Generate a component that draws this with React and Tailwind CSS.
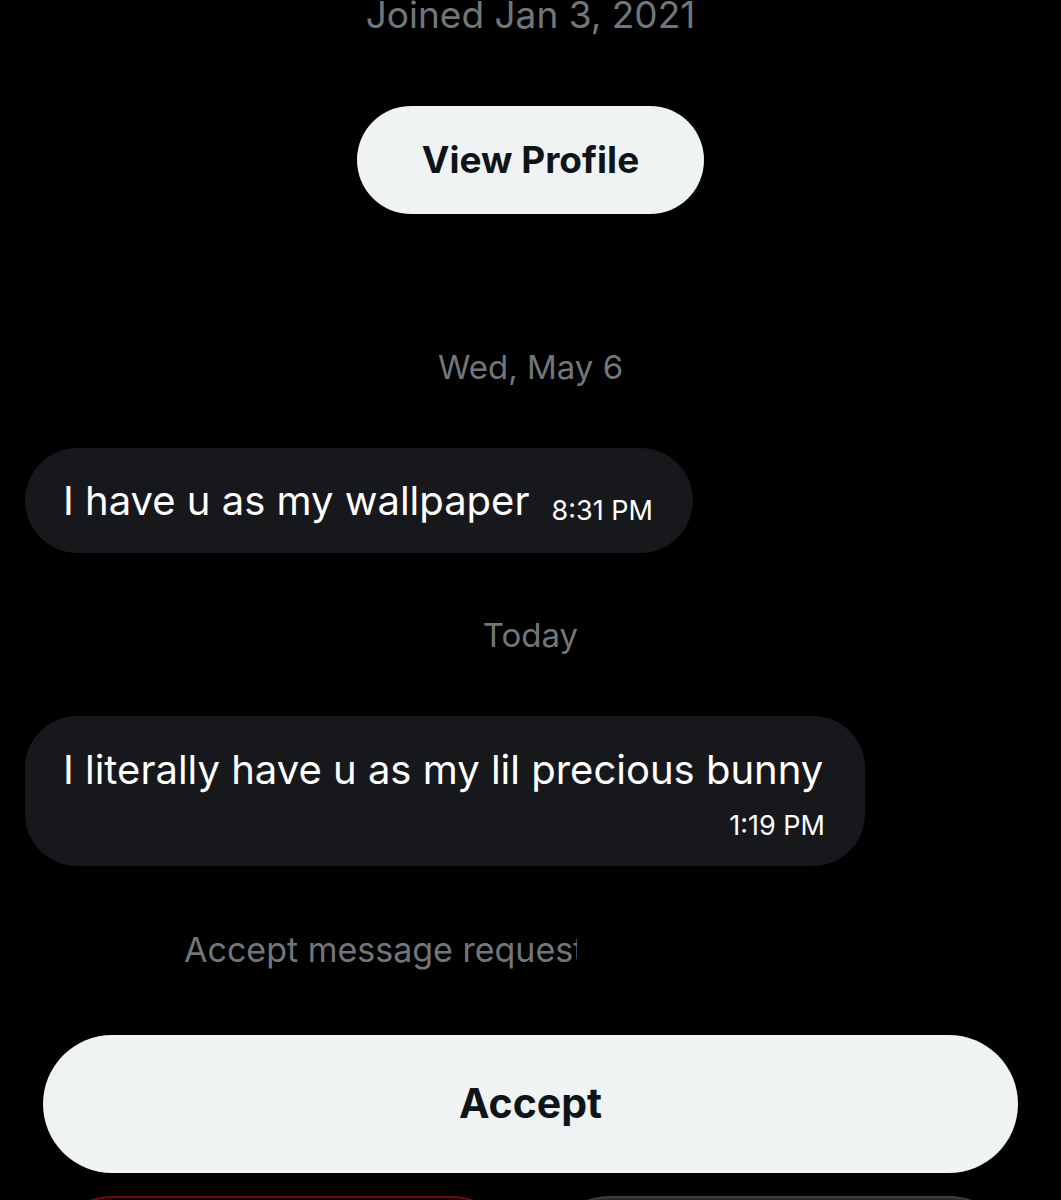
import React from 'react';

const gray = 'text-[#71767b]';

function Bubble({ children, className = '' }) {
    return <div className={`bg-[#16181c] text-white ${className}`}>{children}</div>;
}

export default function App() {
    return (
        <div className="h-[1200px] w-full overflow-hidden bg-black font-['Inter',sans-serif]">
            {/* header del perfil */}
            <div className="flex flex-col items-center">
                <p className={`-mt-[9px] text-[37px] leading-[48px] ${gray}`}>Joined Jan 3, 2021</p>
                <button className="mt-[67px] flex h-[108px] w-[347px] items-center justify-center rounded-full bg-[#eff3f4] text-[37px] font-bold text-[#0f1419]">
                    View Profile
                </button>
            </div>

            {/* mensajes */}
            <p className={`mt-[133px] text-center text-[33px] leading-[40px] ${gray}`}>Wed, May 6</p>

            <div className="mt-[61px] flex pl-[25px]">
                <Bubble className="flex h-[105px] items-center rounded-full pl-[38px] pr-[40px]">
                    <span className="text-[40px]">I have u as my wallpaper</span>
                    <span className="ml-[22px] mt-[22px] text-[27px]">8:31 PM</span>
                </Bubble>
            </div>

            <p className={`mt-[62px] text-center text-[33px] leading-[40px] ${gray}`}>Today</p>

            <div className="mt-[61px] flex pl-[25px]">
                <Bubble className="flex h-[150px] w-[840px] flex-col rounded-[52px] pl-[38px] pr-[40px] pt-[28px]">
                    <span className="text-[40px] leading-[52px]">I literally have u as my lil precious bunny</span>
                    <span className="mt-[12px] self-end text-[27px] leading-[36px]">1:19 PM</span>
                </Bubble>
            </div>

            <div className="mt-[62px] pl-[184px]">
                <div className="w-[393px] overflow-hidden whitespace-nowrap">
                    <span className={`text-[34px] leading-[44px] ${gray}`}>Accept message request</span>
                </div>
            </div>

            {/* acciones */}
            <div className="mt-[63px] px-[43px]">
                <button className="flex h-[138px] w-full items-center justify-center rounded-full bg-[#eff3f4] text-[41px] font-bold text-[#0f1419]">
                    Accept
                </button>
            </div>
            <div className="mt-[23px] flex gap-[21px] px-[43px]">
                <button className="h-[140px] flex-1 rounded-full border-2 border-[#6a0a14] bg-[#120204] text-[38px] font-bold text-[#f4212e]">
                    Delete
                </button>
                <button className="h-[140px] flex-1 rounded-full border-2 border-[#3e3e3e] bg-[#2a2a2a] text-[38px] font-bold text-white">
                    Block
                </button>
            </div>
        </div>
    );
}
